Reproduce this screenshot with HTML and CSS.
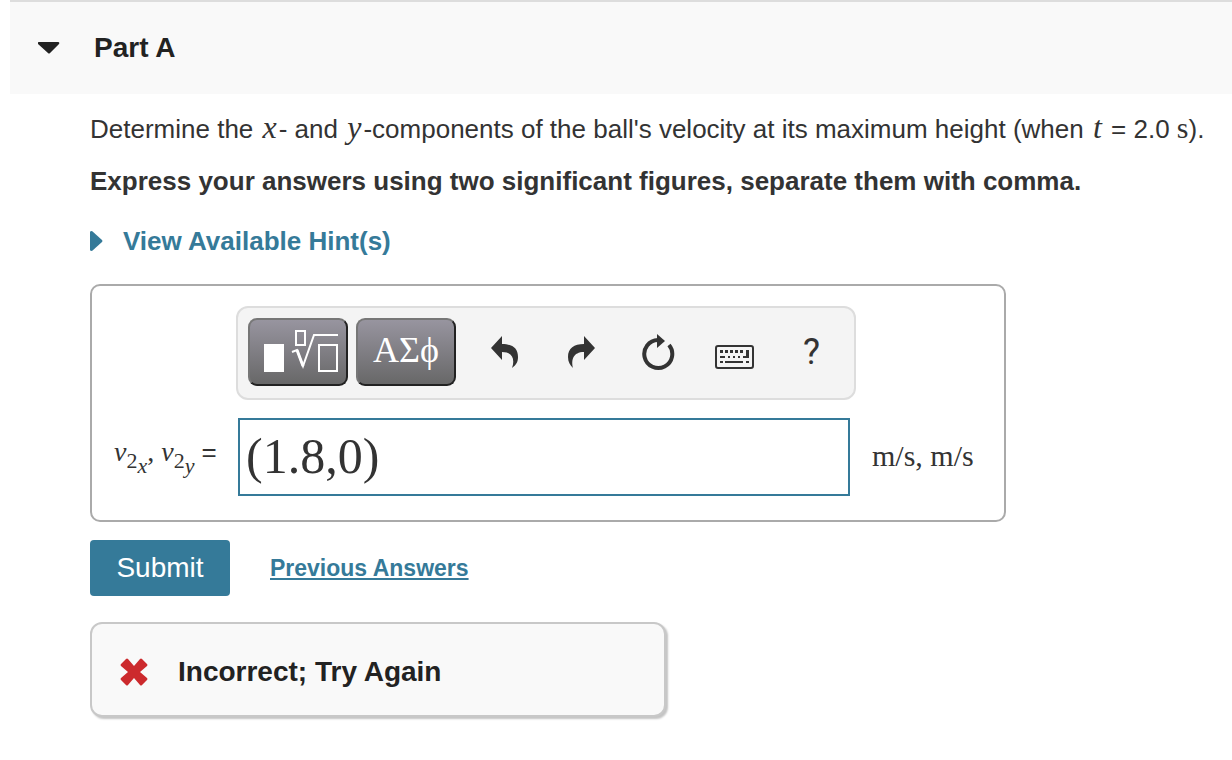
FILE: index.html
```html
<!doctype html>
<html lang="en">
<head>
<meta charset="utf-8">
<meta name="viewport" content="width=device-width, initial-scale=1">
<title>Part A</title>
<link rel="stylesheet" href="styles.css">
</head>
<body>

	<header class="partHeader">
		<button class="toggle" type="button" aria-label="Collapse Part A" aria-expanded="true">
			<svg width="22" height="12" viewBox="0 0 22 12"><path d="M1 0H20Q22 0 21 2L12 11Q11 12 10 11L0 2Q-1 0 1 0Z"/></svg>
		</button>
		<h2>Part A</h2>
	</header>

	<main class="part">

		<p>Determine the <var>x</var>- and <var>y</var>-components of the ball's velocity at its maximum height (when <var>t</var> = 2.0 <span class="unit">s</span>).</p>

		<p class="instructions">Express your answers using two significant figures, separate them with comma.</p>

		<a class="hints" href="#hints">
			<svg width="13" height="20" viewBox="0 0 13 20"><path d="M0 1Q0 0 2 0L12 9Q13 10 12 11L2 20Q0 20 0 19Z"/></svg>
			View Available Hint(s)
		</a>

		<form>

			<div class="answerBox">

				<div class="toolbar">
					<button class="palette" type="button" aria-label="Templates">
						<svg width="80" height="48" viewBox="0 0 80 48">
							<path d="M6 18H26V46H6Z" fill="#fff"/>
							<path d="M38 5H47V19H38ZM61 19H79V45H61Z" fill="none" stroke="#fff" stroke-width="2"/>
							<path d="M34 26L39 24L45 40L56 9H80" fill="none" stroke="#fff" stroke-width="2"/>
							<path d="M39 24L45 40" stroke="#fff" stroke-width="3"/>
						</svg>
					</button>
					<button class="palette" type="button">ΑΣϕ</button>
					<div class="tools">
						<button type="button" aria-label="Undo">
							<svg width="28" height="32" viewBox="0 0 28 32"><path d="M1 12L12 0V8C22 8 28 12 28 21C28 26 26 29 22 32C25 24 23 16 12 16V24Z"/></svg>
						</button>
						<button type="button" aria-label="Redo">
							<svg width="28" height="32" viewBox="0 0 28 32"><path d="M28 12L17 0V8C7 8 1 12 1 21C1 26 3 29 6 32C4 24 6 16 17 16V24Z"/></svg>
						</button>
						<button type="button" aria-label="Reset">
							<svg width="34" height="38" viewBox="0 0 34 38"><path d="M17 7A14 14 0 1 0 28 12" fill="none" stroke="#333" stroke-width="4"/><path d="M16 1L24 8L16 15Z"/></svg>
						</button>
						<button type="button" aria-label="Keyboard shortcuts">
							<svg class="keyboard" width="40" height="24" viewBox="0 0 40 24">
								<rect x="1" y="1" width="37" height="22" rx="2" fill="none" stroke="#333" stroke-width="2"/>
								<path d="M5 5h3v3H5zM10 5h3v3h-3zM15 5h3v3h-3zM20 5h3v3h-3zM25 5h3v3h-3zM31 5h3v8h-6v-2h3zM5 11h5v2H5zM13 11h2v2h-2zM18 11h2v2h-2zM23 11h2v2h-2zM5 16h3v2H5zM10 16h18v2H10zM31 16h3v2h-3z"/>
							</svg>
						</button>
						<button class="help" type="button" aria-label="Help">?</button>
					</div>
				</div>

				<label for="inpAnswer"><var>v</var><sub>2<sub><var>x</var></sub></sub>, <var>v</var><sub>2<sub><var>y</var></sub></sub> <span class="equals">=</span></label>
				<input id="inpAnswer" type="text" value="(1.8,0)">
				<span class="units">m/s, m/s</span>

			</div>

			<div class="actions">
				<button class="submit" type="submit">Submit</button>
				<a class="previous" href="#previous">Previous Answers</a>
			</div>

		</form>

		<div class="feedback" role="status">
			<svg width="28" height="28" viewBox="0 0 28 28"><path d="M6 1Q7 0 8 1L14 8L20 1Q21 0 22 1L27 6Q28 7 27 8L20 14L27 20Q28 21 27 22L22 27Q21 28 20 27L14 20L8 27Q7 28 6 27L1 22Q0 21 1 20L8 14L1 8Q0 7 1 6Z" fill="#cc2a2d"/></svg>
			<strong>Incorrect; Try Again</strong>
		</div>

	</main>

</body>
</html>
```

FILE: styles.css
```css
	* { box-sizing: border-box; }
	body { background: #fff; color: #333; font: 26px/32px "Liberation Sans", Arial, sans-serif; margin: 0; }
	a { color: #357a99; font-weight: bold; }
	button { background: none; border: none; color: inherit; cursor: pointer; font: inherit; padding: 0; }
	svg { display: block; flex: none; fill: #333; }
	var { font-family: "Liberation Serif", "Times New Roman", serif; font-style: italic; }

	.partHeader { align-items: center; background: #f9f9f9; border-top: 2px solid #ddd; color: #222; display: flex; height: 94px; margin-left: 10px; padding-left: 28px; }
	.partHeader h2 { font-size: 28px; line-height: 32px; margin: 0 0 0 34px; }
	.toggle svg { fill: #222; }

	.part { padding: 19px 20px 40px 90px; }
	.part p { margin: 0 0 20px 0; }
	.part p var { font-size: 32px; line-height: 24px; padding: 0 2px; }
	.part p.instructions { font-weight: bold; margin-bottom: 28px; }
	.unit { font-family: "Liberation Serif", "Times New Roman", serif; font-size: 30px; line-height: 24px; }

	.hints { align-items: center; display: flex; gap: 20px; text-decoration: none; width: fit-content; }
	.hints svg { fill: #357a99; }

	.answerBox { align-items: center; border: 2px solid #aaa; border-radius: 10px; display: grid; grid-template-columns: 122px 1fr 132px; margin-top: 27px; max-width: 916px; padding: 20px 0 24px 22px; row-gap: 18px; }

	.toolbar { background: #f4f4f4; border: 2px solid #ddd; border-radius: 12px; display: flex; gap: 8px; grid-column: 2; margin-right: 16px; padding: 10px 4px 12px 10px; }
	.palette { align-items: center; background: linear-gradient(#9996a1, #666) border-box; border: 2px solid; border-color: #777 #222 #222 #777; border-radius: 9px; color: #fff; display: flex; font: 36px/40px "Liberation Serif", "Times New Roman", serif; height: 68px; justify-content: center; padding-bottom: 4px; width: 100px; }
	.tools { display: flex; flex: 1; margin-left: 2px; }
	.tools button { align-items: center; display: flex; flex: 1; justify-content: center; }
	.tools .keyboard { margin-top: 10px; }
	.tools .help { font: 36px/40px Roboto, sans-serif; }

	.answerBox label { font: 28px/32px "Liberation Serif", "Times New Roman", serif; grid-column: 1; padding-bottom: 10px; white-space: nowrap; }
	.answerBox sub { font-size: 22px; line-height: 0; }
	.equals { font: 26px/32px "Liberation Sans", Arial, sans-serif; }
	.answerBox input { background: #fff; border: 2px solid #357a99; color: #333; font: 50px/56px "Liberation Serif", "Times New Roman", serif; height: 78px; margin: 0 22px 0 2px; min-width: 0; outline: none; padding: 0 6px 2px 6px; }
	.units { font: 30px/32px "Liberation Serif", "Times New Roman", serif; padding-bottom: 2px; white-space: nowrap; }

	.actions { align-items: center; display: flex; gap: 40px; margin: 18px 0 26px 0; }
	.submit { background: #357a99; border-radius: 4px; color: #fff; font-size: 28px; height: 56px; width: 140px; }
	.previous { font-size: 23px; }

	.feedback { align-items: center; background: #f9f9f9; border: 2px solid #c8c8c8; border-radius: 12px; box-shadow: 2px 2px 2px #c4c4c4; color: #222; display: flex; font-size: 28px; gap: 30px; height: 95px; max-width: 576px; padding: 4px 28px 0 28px; }
```
